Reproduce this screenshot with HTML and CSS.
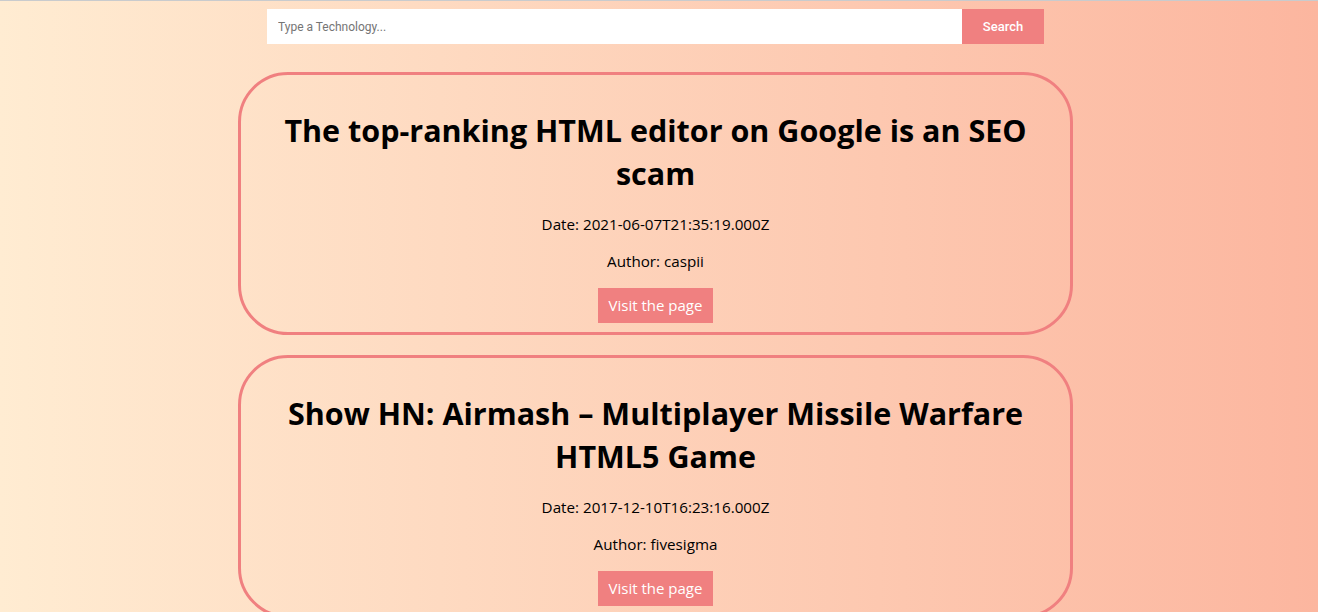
FILE: index.html
```html
<!DOCTYPE html>
<html lang="en">
<head>
<meta charset="utf-8">
<title>Tech News</title>
<link rel="stylesheet" href="styles.css">
</head>
<body>
<div class="page">
  <form class="search">
    <input class="search-input" type="text" placeholder="Type a Technology...">
    <button class="search-btn" type="button">Search</button>
  </form>
  <div class="list">
    <div class="card">
      <h1 class="card-title">The top-ranking HTML editor on Google is an SEO scam</h1>
      <p class="card-meta">Date: 2021-06-07T21:35:19.000Z</p>
      <p class="card-meta">Author: caspii</p>
      <a class="card-link" href="#">Visit the page</a>
    </div>
    <div class="card">
      <h1 class="card-title">Show HN: Airmash – Multiplayer Missile Warfare HTML5 Game</h1>
      <p class="card-meta">Date: 2017-12-10T16:23:16.000Z</p>
      <p class="card-meta">Author: fivesigma</p>
      <a class="card-link" href="#">Visit the page</a>
    </div>
  </div>
</div>
</body>
</html>
```
FILE: styles.css
```css
html {
  background: linear-gradient(to right, #ffecd2 0%, #fcb69f 100%);
  min-height: 100%;
}
body {
  margin: 0;
  border-top: 1px solid #c9cbcd;
  font-family: "Open Sans", "Noto Sans", sans-serif;
  min-height: 100vh;
}
.page {
  width: 1311px;
  display: flex;
  flex-direction: column;
  align-items: center;
}
.search {
  display: flex;
  margin-top: 8px;
  width: 777px;
  height: 35px;
}
.search-input {
  flex: 1;
  border: none;
  outline: none;
  padding: 0 11px;
  font-family: Roboto, "Liberation Sans", sans-serif;
  font-size: 12px;
  background: #fff;
  margin: 0;
}
.search-input::placeholder {
  color: #757575;
}
.search-btn {
  width: 82px;
  border: none;
  background: #f08080;
  color: #fff;
  font-family: Roboto, "Liberation Sans", sans-serif;
  font-size: 13px;
  font-weight: 500;
  margin: 0;
  padding: 0;
}
.list {
  display: flex;
  flex-direction: column;
  gap: 20px;
  margin-top: 28px;
}
.card {
  width: 789px;
  padding: 10px 20px 9px;
  border: 3px solid #f08080;
  border-radius: 50px;
  display: flex;
  flex-direction: column;
  align-items: center;
  text-align: center;
}
.card-title {
  font-size: 30.5px;
  font-weight: 700;
  line-height: 43px;
  margin: 24px 0 19px;
  color: #000;
}
.card-meta {
  font-size: 15.2px;
  line-height: 21px;
  margin: 0 0 16px;
  color: #000;
}
.card-link {
  display: block;
  background: #f08080;
  color: #fff;
  text-decoration: none;
  font-size: 15px;
  line-height: 21px;
  padding: 7px 11px;
}
```
